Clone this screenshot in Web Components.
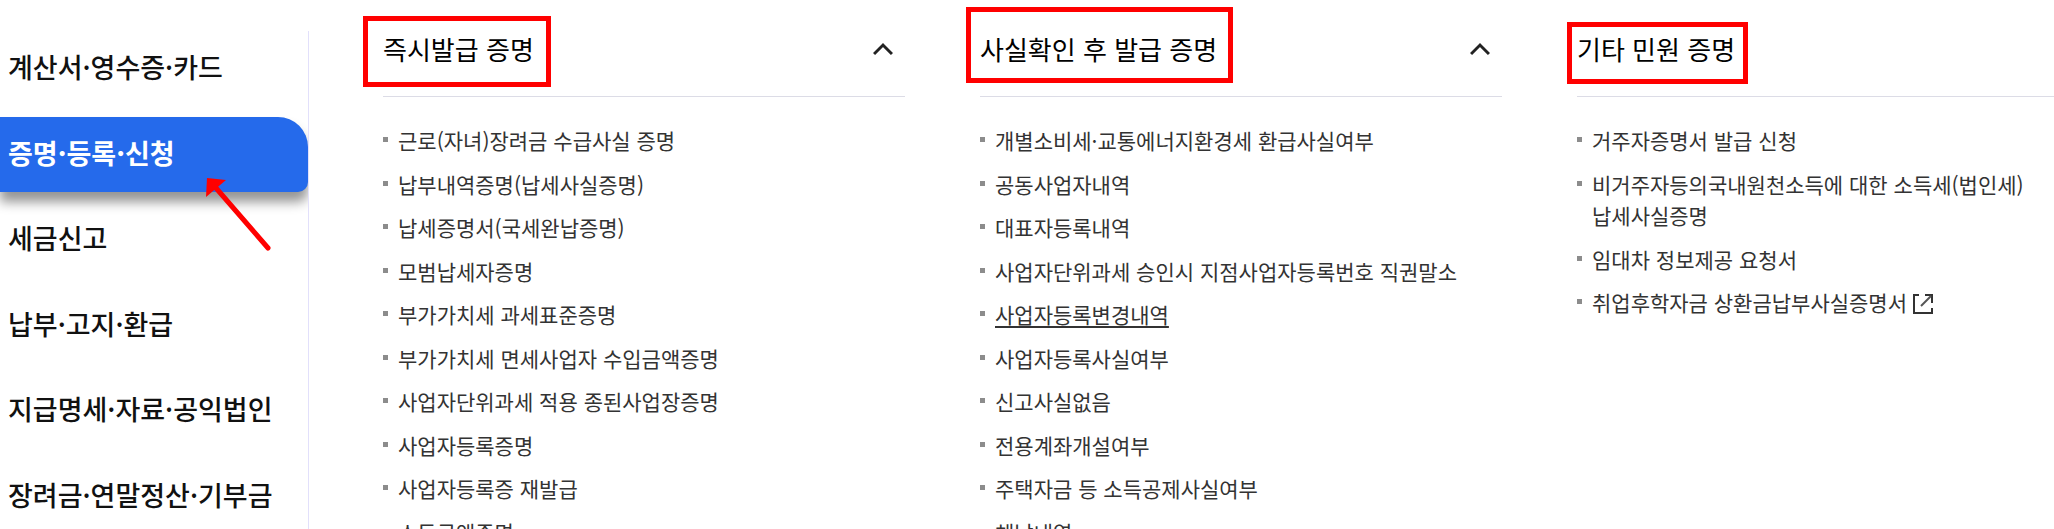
<!DOCTYPE html>
<html lang="ko">
<head>
<meta charset="utf-8">
<title>증명·등록·신청</title>
<style>
  body { margin: 0; height: 100vh; overflow: hidden; background: #fff; color: #111; font-family: "Noto Sans CJK KR", "Noto Sans CJK JP", sans-serif; line-height: 1.5; }
</style>
</head>
<body>
<tax-menu>
  <side-menu slot="side">
    <side-item>계산서·영수증·카드</side-item>
    <side-item active>증명·등록·신청</side-item>
    <side-item>세금신고</side-item>
    <side-item>납부·고지·환급</side-item>
    <side-item>지급명세·자료·공익법인</side-item>
    <side-item>장려금·연말정산·기부금</side-item>
  </side-menu>
  <menu-column heading="즉시발급 증명" collapsible>
    <red-frame slot="mark" style="--x:-20px;--y:-15px;--w:188px;--h:71px"></red-frame>
    <menu-link>근로(자녀)장려금 수급사실 증명</menu-link>
    <menu-link>납부내역증명(납세사실증명)</menu-link>
    <menu-link>납세증명서(국세완납증명)</menu-link>
    <menu-link>모범납세자증명</menu-link>
    <menu-link>부가가치세 과세표준증명</menu-link>
    <menu-link>부가가치세 면세사업자 수입금액증명</menu-link>
    <menu-link>사업자단위과세 적용 종된사업장증명</menu-link>
    <menu-link>사업자등록증명</menu-link>
    <menu-link>사업자등록증 재발급</menu-link>
    <menu-link>소득금액증명</menu-link>
  </menu-column>
  <menu-column heading="사실확인 후 발급 증명" collapsible>
    <red-frame slot="mark" style="--x:-14px;--y:-24px;--w:267px;--h:76px"></red-frame>
    <menu-link>개별소비세·교통에너지환경세 환급사실여부</menu-link>
    <menu-link>공동사업자내역</menu-link>
    <menu-link>대표자등록내역</menu-link>
    <menu-link>사업자단위과세 승인시 지점사업자등록번호 직권말소</menu-link>
    <menu-link current>사업자등록변경내역</menu-link>
    <menu-link>사업자등록사실여부</menu-link>
    <menu-link>신고사실없음</menu-link>
    <menu-link>전용계좌개설여부</menu-link>
    <menu-link>주택자금 등 소득공제사실여부</menu-link>
    <menu-link>체납내역</menu-link>
  </menu-column>
  <menu-column heading="기타 민원 증명">
    <red-frame slot="mark" style="--x:-10px;--y:-9px;--w:181px;--h:62px"></red-frame>
    <menu-link>거주자증명서 발급 신청</menu-link>
    <menu-link>비거주자등의국내원천소득에 대한 소득세(법인세) 납세사실증명</menu-link>
    <menu-link>임대차 정보제공 요청서</menu-link>
    <menu-link external>취업후학자금 상환금납부사실증명서</menu-link>
  </menu-column>
</tax-menu>

<script>
!(function () {
  const define = (name, html, setup = () => {}) =>
    customElements.define(
      name,
      class extends HTMLElement {
        constructor() {
          super().attachShadow({ mode: "open" }).innerHTML = html(this);
        }
        connectedCallback() {
          setup(this, this.shadowRoot);
        }
      }
    );

  // ********************************************************** <tax-menu>
  define("tax-menu", () => /* html */ `
    <style>
      :host { display: flex; align-items: flex-start; }
      /* the last column runs past the right edge of the window */
      main { flex: 1; min-width: 0; display: grid; grid-template-columns: repeat(3, minmax(0, 1fr)); gap: 75px; margin: 0 -45px 0 74px; }
    </style>
    <slot name="side"></slot>
    <main><slot></slot></main>`);

  // ********************************************************** <side-menu>
  define("side-menu", () => /* html */ `
    <style>
      :host { display: block; box-sizing: border-box; width: 309px; height: calc(100vh - 31px); margin-top: 31px; border-right: 1px solid #e2e0fb; }
      nav { display: grid; gap: 10px; }
    </style>
    <nav><slot></slot></nav>`);

  // ********************************************************** <side-item>
  define("side-item", (host) => /* html */ `
    <style>
      :host { display: block; position: relative; }
      a { display: block; padding: 16px 8px 19px; font-size: 27px; font-weight: 500; color: #111; text-decoration: none; white-space: nowrap; }
      :host([active]) a { background: #256aeb; color: #fff; font-weight: 700; border-radius: 0 30px 10px 0; box-shadow: 0 10px 12px rgba(0, 0, 0, .42); clip-path: inset(0 0 -30px 0); }
      svg { position: absolute; left: 204px; top: 59px; }
    </style>
    <a href="#"><slot></slot></a>
    ${host.hasAttribute("active") ? /* html */ `<svg width="70" height="78" viewBox="0 0 70 78" fill="none"><path d="M12 12L64 72" stroke="#f00" stroke-width="5" stroke-linecap="round"/><path d="M3 2L22 4L2 21Z" fill="#f00"/></svg>` : ""}`);

  // ********************************************************** <menu-column>
  define("menu-column", () => /* html */ `
    <style>
      :host { display: block; }
      header { position: relative; display: flex; align-items: center; justify-content: space-between; padding: 29px 12px 28px 0; border-bottom: 1px solid #dcdce6; }
      h2 { margin: 0; font-size: 26px; font-weight: 400; color: #000; }
      button { display: flex; padding: 0; border: 0; background: none; }
      [role=list] { display: grid; gap: 12px; padding-top: 28px; }
    </style>
    <header><h2></h2><slot name="mark"></slot></header>
    <div role="list"><slot></slot></div>`,
    (host, root) => {
      let title = host.getAttribute("heading");
      root.querySelector("h2").textContent = title;
      if (host.hasAttribute("collapsible"))
        root.querySelector("header").insertAdjacentHTML("beforeend", /* html */ `
          <button aria-label="${title}" aria-expanded="true"><svg width="20" height="14" viewBox="0 0 20 14" fill="none" stroke="#222" stroke-width="3"><path d="M1 12L10 3L19 12"/></svg></button>`);
    });

  // ********************************************************** <red-frame>
  define("red-frame", () => /* html */ `
    <style>
      :host { position: absolute; box-sizing: border-box; left: var(--x); top: calc(31px + var(--y)); width: var(--w); height: var(--h); border: 5px solid #f00; pointer-events: none; }
    </style>`);

  // ********************************************************** <menu-link>
  define("menu-link", (host) => /* html */ `
    <style>
      :host { display: flex; gap: 10px; font-size: 21px; }
      i { flex: none; width: 5px; height: 5px; margin-top: 12px; background: #8c8c8c; }
      a { color: #333; text-decoration: none; word-break: keep-all; }
      :host([current]) a { text-decoration: underline 2px; text-underline-offset: 3px; }
      svg { margin-left: 6px; vertical-align: -3px; }
    </style>
    <i></i>
    <a href="#"><slot></slot>${host.hasAttribute("external") ? /* html */ `<svg width="20" height="20" viewBox="0 0 20 20" fill="none" stroke="#333" stroke-width="2"><path d="M6 1H1V19H19V14M12 1H19V9"/><path d="M8 12L18 2" stroke="#555"/></svg>` : ""}</a>`,
    (host) => host.setAttribute("role", "listitem"));
  // ********************************************************** end IIFE
})();
</script>
</body>
</html>
